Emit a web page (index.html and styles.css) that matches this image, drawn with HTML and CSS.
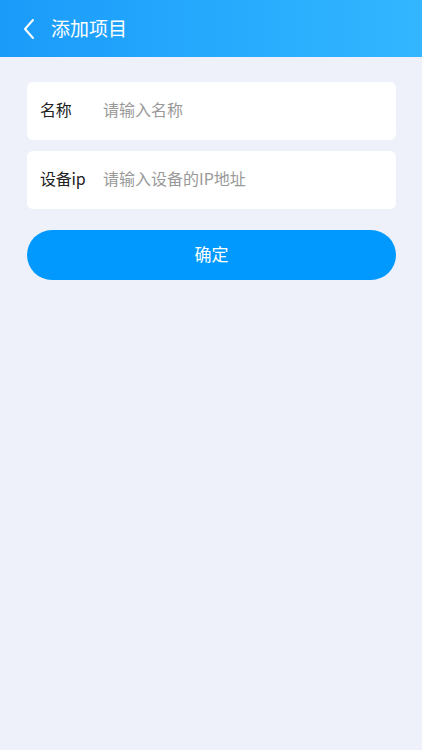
FILE: index.html
```html
<!DOCTYPE html>
<html lang="zh">
<head>
<meta charset="utf-8">
<link rel="stylesheet" href="styles.css">
</head>
<body>
<header class="nav">
  <svg class="back" width="14" height="22" viewBox="0 0 14 22"><path d="M11 2 L3 11 L11 20" fill="none" stroke="#fff" stroke-width="2" stroke-linecap="round" stroke-linejoin="round"/></svg>
  <span class="title">添加项目</span>
</header>
<main class="content">
  <div class="field"><span class="label">名称</span><span class="ph">请输入名称</span></div>
  <div class="field"><span class="label">设备ip</span><span class="ph">请输入设备的IP地址</span></div>
  <div class="btn">确定</div>
</main>
</body>
</html>
```
FILE: styles.css
```css
html, body { margin: 0; padding: 0; }
body {
  width: 422px; height: 750px;
  background: #eef1f9;
  font-family: "Noto Sans CJK SC", "Noto Sans", sans-serif;
}
.nav {
  height: 57px;
  background: linear-gradient(90deg, #1a9bfa 0%, #2aaffe 70%, #33b6ff 100%);
  display: flex; align-items: center;
  padding-left: 22px; padding-bottom: 2px;
  box-sizing: border-box;
}
.back { margin-right: 15px; margin-top: 2px; }
.title { color: #fff; font-size: 19px; }
.content { padding: 25px 26px 0 27px; display: flex; flex-direction: column; }
.field {
  background: #fff; border-radius: 6px;
  height: 58px; display: flex; align-items: center;
  padding-left: 13px; margin-bottom: 11px;
  box-sizing: border-box; padding-bottom: 4px;
}
.label { width: 63px; font-size: 16px; color: #222; letter-spacing: -0.2px; }
.ph { font-size: 16px; color: #999; }
.btn {
  margin-top: 10px; height: 50px; border-radius: 25px;
  background: #0199fe; color: #fff; font-size: 17px;
  display: flex; align-items: center; justify-content: center;
  box-sizing: border-box; padding-bottom: 3px;
}
```
